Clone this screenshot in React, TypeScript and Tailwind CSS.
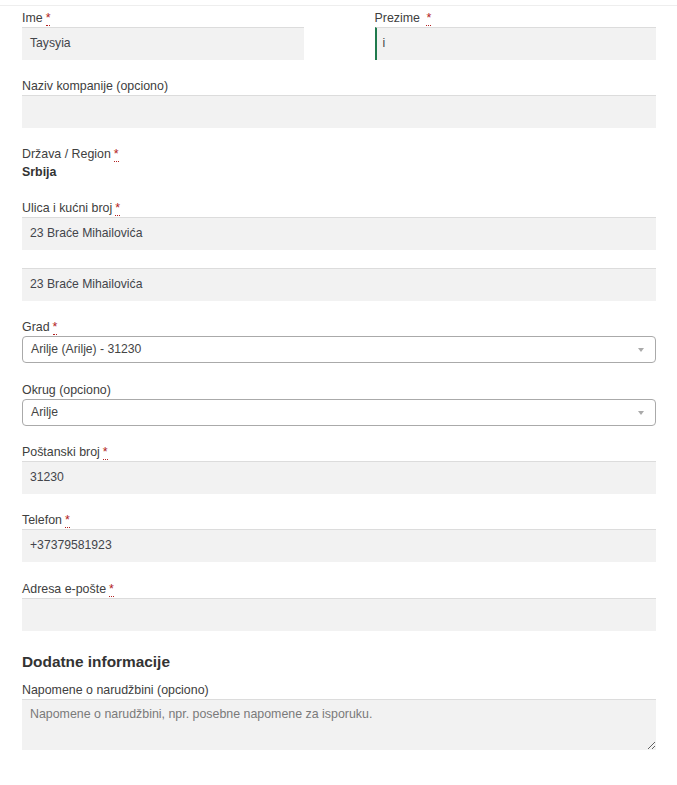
import type { ReactNode } from 'react'

function Req() {
  return (
    <abbr
      title="obavezno"
      className="ml-[3px] text-[#b22222] no-underline border-b border-dotted border-[#b22222] leading-none"
    >
      *
    </abbr>
  )
}

function Label({ children, req }: { children: ReactNode; req?: boolean }) {
  return (
    <label className="block h-[19px] pt-px text-[12.4px] leading-[18px] text-[#404040]">
      {children}
      {req && <Req />}
    </label>
  )
}

function TextInput({ value, focused }: { value?: string; focused?: boolean }) {
  return (
    <div
      className={`h-[33px] bg-[#f2f2f2] border-t border-[#dcdcdc] flex items-center pb-px text-[12.2px] text-[#43454b] ${
        focused ? 'border-l-2 border-l-[#1f7a4d] pl-[6px] text-[#888]' : 'pl-[8px]'
      }`}
    >
      {value}
    </div>
  )
}

function Select({ value }: { value: string }) {
  return (
    <div className="h-[27px] border border-[#aaa] rounded-[4px] bg-white flex items-center justify-between pl-[8px] pr-[11px] text-[12.2px] text-[#444]">
      <span>{value}</span>
      <span className="w-0 h-0 border-l-[3px] border-r-[3px] border-t-[4px] border-l-transparent border-r-transparent border-t-[#aaa]" />
    </div>
  )
}

export default function App() {
  return (
    <div className="w-[677px] min-h-[785px] bg-white font-['Liberation_Sans',Arial,sans-serif]">
      <div className="pt-[5px]">
        <div className="h-px bg-[#eeeeee]" />
      </div>
      <div className="px-[22px] pr-[21px] pt-[2px]">
        <div className="grid grid-cols-2 gap-x-[71px] mb-4">
          <div>
            <Label req>Ime</Label>
            <TextInput value="Taysyia" />
          </div>
          <div>
            <Label req>Prezime&nbsp;</Label>
            <TextInput value="i" focused />
          </div>
        </div>

        <div className="mb-4">
          <Label>Naziv kompanije (opciono)</Label>
          <TextInput />
        </div>

        <div className="mb-4">
          <Label req>Država / Region</Label>
          <div className="text-[12.4px] leading-[19px] font-bold text-[#333]">Srbija</div>
        </div>

        <div className="mb-[18px]">
          <Label req>Ulica i kućni broj</Label>
          <TextInput value="23 Braće Mihailovića" />
        </div>
        <div className="mb-4">
          <TextInput value="23 Braće Mihailovića" />
        </div>

        <div className="mb-[17px]">
          <Label req>Grad</Label>
          <Select value="Arilje (Arilje) - 31230" />
        </div>

        <div className="mb-4">
          <Label>Okrug (opciono)</Label>
          <Select value="Arilje" />
        </div>

        <div className="mb-4">
          <Label req>Poštanski broj</Label>
          <TextInput value="31230" />
        </div>

        <div className="mb-[17px]">
          <Label req>Telefon</Label>
          <TextInput value="+37379581923" />
        </div>

        <div className="mb-[21px]">
          <Label req>Adresa e-pošte</Label>
          <TextInput />
        </div>

        <h3 className="text-[15.4px] leading-[20px] font-bold text-[#333] mb-[8px]">Dodatne informacije</h3>
        <div>
          <Label>Napomene o narudžbini (opciono)</Label>
          <textarea
            className="block w-full h-[51px] bg-[#f2f2f2] border-t border-[#dcdcdc] px-[8px] pt-[5px] text-[12.4px] text-[#43454b] placeholder:text-[#7a7a7a] outline-none"
            placeholder="Napomene o narudžbini, npr. posebne napomene za isporuku."
          />
        </div>
      </div>
    </div>
  )
}
